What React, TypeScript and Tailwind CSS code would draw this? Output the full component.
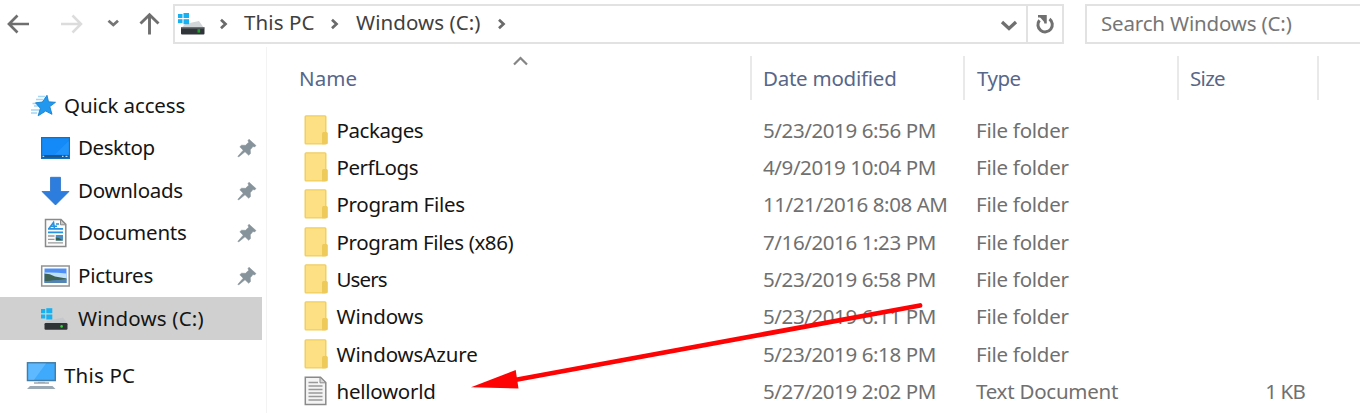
import React from 'react';
import clsx from 'clsx';

const stroke = { fill: 'none', strokeLinecap: 'butt' as const, strokeLinejoin: 'miter' as const };

function Chevron({ className }: { className?: string }) {
  return (
    <svg className={clsx('shrink-0', className)} width="10" height="12" viewBox="0 0 10 12">
      <path d="M2 1.800 L6.500 6 L2 10.200" {...stroke} stroke="#6a6a6a" strokeWidth="2.700" />
    </svg>
  );
}

function DriveIcon() {
  return (
    <svg width="28" height="24" viewBox="0 0 28 24" className="shrink-0">
      <path d="M7 12 L21 9 L26 16 H3.500 Z" fill="#d3d6d8" />
      <rect x="0" y="2" width="4.500" height="4" fill="#17b1f2" />
      <rect x="5.500" y="1" width="5.500" height="5" fill="#17b1f2" />
      <rect x="0" y="7.200" width="4.500" height="4" fill="#17b1f2" />
      <rect x="5.500" y="7.200" width="5.500" height="5" fill="#17b1f2" />
      <rect x="3" y="15" width="23.500" height="7.500" rx="1" fill="#30353a" />
      <rect x="3" y="15" width="23.500" height="1.500" rx="0.700" fill="#6d7276" />
      <rect x="19.500" y="17.200" width="2.600" height="3.400" fill="#1f9f2b" />
    </svg>
  );
}

function SideDriveIcon() {
  return (
    <svg width="28" height="24" viewBox="0 0 28 24" className="shrink-0">
      <path d="M6 14 L22 10.500 L27 17 H3.500 Z" fill="#c5c8ca" />
      <rect x="0" y="2" width="4.200" height="4.200" fill="#17b1f2" />
      <rect x="5.300" y="1.200" width="6" height="5" fill="#17b1f2" />
      <rect x="0" y="7.500" width="4.200" height="4" fill="#17b1f2" />
      <rect x="5.300" y="7.500" width="6" height="5" fill="#17b1f2" />
      <rect x="3.500" y="16" width="23" height="6.800" rx="1.200" fill="#2f3335" />
      <circle cx="20.600" cy="19.400" r="1.300" fill="#35d03c" />
    </svg>
  );
}

function StarIcon() {
  return (
    <svg width="26" height="24" viewBox="0 0 26 24" className="shrink-0">
      <path d="M7 2.500 H14 M5 5.500 H12 M1.500 9.500 H7 M3 12 H9 M0 16 H8 M0 19 H6" stroke="#a5d6f3" strokeWidth="1.400" />
      <path d="M16 1.300 L17.500 7.800 L24.500 8.300 L18.800 12.600 L21 20.300 L14.700 17 L7.200 21.800 L9.300 14.200 L4.500 8.800 L11.400 8 Z" fill="#2299ee" stroke="#1581cf" strokeWidth="0.900" />
    </svg>
  );
}

function DesktopIcon() {
  return (
    <svg width="30" height="24" viewBox="0 0 30 24" className="shrink-0">
      <rect x="1.600" y="1.600" width="27.800" height="20.800" fill="#138af8" stroke="#1571bd" strokeWidth="1.200" />
      <path d="M15 18.500 L28.800 5 V18.500 Z" fill="#2b9bff" opacity=".6" />
      <rect x="2.200" y="19" width="26.600" height="2.800" fill="#1b5688" />
      <path d="M2.600 20.400 H4.200 M22 20.400 H23.500 M25.500 20.400 H27.500" stroke="#b9dcfa" strokeWidth="1.200" />
    </svg>
  );
}

function DownloadIcon() {
  return (
    <svg width="30" height="30" viewBox="0 0 30 30" className="shrink-0">
      <path d="M10.500 1.300 H20.500 V15.500 H29 L15.500 29 L2 15.500 H10.500 Z" fill="#2c7ddd" stroke="#2b71c8" strokeWidth="0.800" />
    </svg>
  );
}

function DocumentIcon() {
  return (
    <svg width="24" height="30" viewBox="0 0 24 30" className="shrink-0">
      <path d="M1.500 1.500 H17 L21.800 6.300 V28.500 H1.500 Z" fill="#fbfbfb" stroke="#8a8a8a" strokeWidth="1.500" />
      <path d="M16.500 1.500 V6.800 H21.800 Z" fill="#c9c9c9" stroke="#8a8a8a" />
      <path d="M5 10.500 L9.500 4.500 L10.500 10.500 M7 8.300 H13 M12 6 H15" stroke="#2592e2" strokeWidth="1.600" fill="none" />
      <path d="M4 10.800 H19 M4 14.300 H19" stroke="#2592e2" strokeWidth="1.700" />
      <path d="M4 18 H10.500 M4 21.300 H10.500 M4 24.800 H19" stroke="#9a9a9a" strokeWidth="1.300" />
      <rect x="11.800" y="17" width="7.200" height="5.500" fill="#4d8dc6" />
      <path d="M11.800 22.500 V19.500 L15 20 L19 22.500 Z" fill="#34604e" />
    </svg>
  );
}

function PictureIcon() {
  return (
    <svg width="30" height="24" viewBox="0 0 30 24" className="shrink-0">
      <rect x="1.700" y="2" width="27.500" height="20" fill="#fff" stroke="#939393" strokeWidth="1.500" />
      <rect x="4.500" y="4.500" width="22" height="14.500" fill="#4f8ff5" />
      <path d="M4.500 8.500 Q14 8 26.500 9.500 V14.500 H4.500 Z" fill="#bfe0fb" />
      <path d="M4.500 9.500 Q10 9.500 15 12.500 L26.500 14.500 V15.500 L4.500 17.500 Z" fill="#3e6355" />
      <path d="M4.500 17.200 L26.500 15.200 V19 H4.500 Z" fill="#5384b2" />
    </svg>
  );
}

function PcIcon() {
  return (
    <svg width="30" height="28" viewBox="0 0 30 28" className="shrink-0">
      <rect x="1.500" y="0.800" width="27.800" height="17.700" fill="#3fa9fb" stroke="#417da8" strokeWidth="1.500" />
      <path d="M2.300 1.600 H20 L8 17.700 H2.300 Z" fill="#6cc1ff" opacity=".7" />
      <path d="M12 19.500 H19 V21 H12 Z" fill="#c3ccd2" />
      <path d="M8 21 H23" stroke="#8b99a4" strokeWidth="1.300" />
      <path d="M4 24 H26.500 L29.500 27 H1 Z" fill="#9ba9b5" />
    </svg>
  );
}

function PinIcon() {
  return (
    <svg width="20" height="20" viewBox="0 0 20 20" className="shrink-0">
      <path d="M12 1.200 L19 7.600 L17.600 9 L16 8.500 L13.300 11.800 L13.500 15.600 L11.700 17.300 L8 13.800 L1.600 19 L0.900 18.300 L6.200 12.200 L2.800 8.800 L4.500 7.200 L8.500 7.300 L11.700 4.200 L11 2.400 Z" fill="#87939b" stroke="#87939b" strokeWidth="0.500" />
    </svg>
  );
}

function FolderIcon() {
  return (
    <svg width="25" height="30" viewBox="0 0 25 30" className="shrink-0">
      <rect x="1.200" y="0.900" width="20.600" height="28" rx="0.800" fill="#fde083" stroke="#efcd5f" strokeWidth="1.400" />
      <path d="M18 29.300 V18.500 Q18 17 19.500 17 H22.400 Q23.800 17 23.800 18.500 V28 Q23.800 29.300 22.400 29.300 Z" fill="#edca59" />
    </svg>
  );
}

function TextFileIcon() {
  return (
    <svg width="25" height="30" viewBox="0 0 25 30" className="shrink-0">
      <path d="M1.300 1.200 H16.500 L21.800 6.500 V28.500 H1.300 Z" fill="#f4f4f4" stroke="#8a8a8a" strokeWidth="1.500" />
      <path d="M16 1.200 V6.800 H21.800 Z" fill="#d8d8d8" stroke="#8a8a8a" />
      <path d="M4.500 6.500 H14 M4.500 10 H18.500 M4.500 13.500 H18.500 M4.500 17 H18.500 M4.500 20.500 H18.500 M4.500 24 H18.500" stroke="#999" strokeWidth="1.300" />
    </svg>
  );
}

const quickItems = [
  { label: 'Desktop', icon: <DesktopIcon />, pad: 'pl-[40px]', gap: 'gap-[8px]', track: 'tracking-[-0.45px]' },
  { label: 'Downloads', icon: <DownloadIcon />, pad: 'pl-[40px]', gap: 'gap-[8px]', track: 'tracking-[-0.28px]' },
  { label: 'Documents', icon: <DocumentIcon />, pad: 'pl-[44px]', gap: 'gap-[10px]', track: 'tracking-[-0.2px]' },
  { label: 'Pictures', icon: <PictureIcon />, pad: 'pl-[40px]', gap: 'gap-[8px]', track: 'tracking-[-0.26px]' },
];

const files = [
  { name: 'Packages', date: '5/23/2019 6:56 PM', track: 'tracking-[-0.44px]', dateTrack: 'tracking-[-0.4px]' },
  { name: 'PerfLogs', date: '4/9/2019 10:04 PM', track: 'tracking-[-0.44px]', dateTrack: 'tracking-[-0.4px]' },
  { name: 'Program Files', date: '11/21/2016 8:08 AM', track: 'tracking-[-0.3px]', dateTrack: 'tracking-[-0.42px]' },
  { name: 'Program Files (x86)', date: '7/16/2016 1:23 PM', track: 'tracking-[-0.38px]', dateTrack: 'tracking-[-0.4px]' },
  { name: 'Users', date: '5/23/2019 6:58 PM', track: 'tracking-[-0.9px]', dateTrack: 'tracking-[-0.4px]' },
  { name: 'Windows', date: '5/23/2019 6:11 PM', track: 'tracking-[-0.1px]', dateTrack: 'tracking-[-0.4px]' },
  { name: 'WindowsAzure', date: '5/23/2019 6:18 PM', track: 'tracking-[-0.12px]', dateTrack: 'tracking-[-0.4px]' },
  { name: 'helloworld', date: '5/27/2019 2:02 PM', track: 'tracking-[-0.26px]', dateTrack: 'tracking-[-0.4px]', doc: true },
];

function Toolbar() {
  return (
    <header className="flex h-[47px] items-start pt-1 text-[#404040]">
      <div className="flex h-[40px] w-[173px] shrink-0 items-center">
        <svg width="173" height="40" viewBox="0 0 173 40">
          <path d="M29 20 H9.500 M17.500 11.500 L9 20 L17.500 28.500" {...stroke} stroke="#6f6f6f" strokeWidth="2.700" />
          <path d="M61 20 H80.500 M72.500 11.500 L81 20 L72.500 28.500" {...stroke} stroke="#dcdcdc" strokeWidth="2.500" />
          <path d="M108.500 16.800 L113.300 21 L118 16.800" {...stroke} stroke="#757575" strokeWidth="2.800" />
          <path d="M149.500 30.500 V11.500 M140.500 19.500 L149.500 10.800 L158.500 19.500" {...stroke} stroke="#6f6f6f" strokeWidth="2.900" />
        </svg>
      </div>
      <div className="flex h-[40px] w-[891px] shrink-0 items-center border-2 border-[#e2e2e2] pl-[3px]">
        <DriveIcon />
        <Chevron className="ml-[13px]" />
        <span className="-mt-[5px] ml-[15px] w-[74px] tracking-[0.1px]">This PC</span>
        <Chevron className="ml-[12px]" />
        <span className="-mt-[5px] ml-[16px] w-[127px] tracking-[0.08px]">Windows (C:)</span>
        <Chevron className="ml-[14px]" />
        <svg className="mt-[3px] mr-[8px] ml-auto" width="18" height="12" viewBox="0 0 18 12">
          <path d="M2 2 L9 8.500 L16 2" {...stroke} stroke="#707070" strokeWidth="3.300" />
        </svg>
        <div className="flex h-full w-[36px] items-center justify-center border-l-2 border-[#e2e2e2] pt-[2px]">
          <svg width="20" height="22" viewBox="0 0 20 22">
            <path d="M14.500 5 A7.200 7.200 0 1 1 4.500 6.200" {...stroke} stroke="#707070" strokeWidth="3" />
            <path d="M3 2.300 H10.500 V9.500" {...stroke} stroke="#707070" strokeWidth="2.500" />
            <path d="M10 2 V9 L4 2 Z" fill="#707070" />
          </svg>
        </div>
      </div>
      <div className="ml-[21px] flex h-[40px] grow items-center border-y-2 border-l-2 border-[#e2e2e2] pl-[14px] text-[#767676]">
        <span className="-mt-[2px] tracking-[-0.17px]">Search Windows (C:)</span>
      </div>
    </header>
  );
}

function Sidebar() {
  return (
    <aside className="h-full w-[267px] shrink-0 border-r border-[#f3f3f3] pt-[37px] text-[#151515]">
      <div className="flex h-[43px] items-center gap-[7px] pl-[31px]">
        <StarIcon />
        <span className="-mt-[2px] tracking-[-0.1px]">Quick access</span>
      </div>
      {quickItems.map((item) => (
        <div key={item.label} className={clsx('flex h-[42.6px] items-center pr-[9px]', item.pad, item.gap)}>
          {item.icon}
          <span className={clsx('-mt-[2px] grow', item.track)}>{item.label}</span>
          <PinIcon />
        </div>
      ))}
      <div className="flex h-[42.5px] w-[262px] items-center gap-[9px] bg-[#d0d0d0] pl-[41px]">
        <SideDriveIcon />
        <span className="-mt-[2px] tracking-[0.18px]">Windows (C:)</span>
      </div>
      <div className="mt-[15px] flex h-[43px] items-center gap-[8px] pl-[26px]">
        <PcIcon />
        <span className="-mt-[2px] tracking-[0.2px]">This PC</span>
      </div>
    </aside>
  );
}

export default function App() {
  return (
    <div className="relative flex h-[413px] w-[1360px] flex-col overflow-hidden bg-white font-['Noto_Sans','Open_Sans',sans-serif] text-[20.5px] leading-[28px] whitespace-nowrap">
      <Toolbar />
      <div className="flex min-h-0 grow">
        <Sidebar />
        <main className="grow pt-[9px]">
          <div className="flex h-[44px] items-center text-[#57678a]">
            <div className="flex h-full w-[485px] items-center border-r-2 border-[#e9e9e9] pl-[32px]">
              <span className="w-[214px] tracking-[0.05px]">Name</span>
              <svg className="-mt-[35px]" width="16" height="10" viewBox="0 0 16 10">
                <path d="M1 8.500 L7.500 2 L14 8.500" {...stroke} stroke="#858585" strokeWidth="2.200" />
              </svg>
            </div>
            <div className="flex h-full w-[213px] items-center border-r-2 border-[#e9e9e9] pl-[11px] tracking-[-0.25px]">Date modified</div>
            <div className="flex h-full w-[214px] items-center border-r-2 border-[#e9e9e9] pl-[12px] tracking-[-0.5px]">Type</div>
            <div className="flex h-full w-[140px] items-center border-r-2 border-[#e9e9e9] pl-[11px] tracking-[-0.7px]">Size</div>
          </div>
          <div className="pt-[10.900px]">
            {files.map((f) => (
              <div key={f.name} className="flex h-[37.350px] items-center text-[#707070]">
                <div className="flex w-[496px] items-center gap-[8px] pl-[36.500px] text-[#151515]">
                  {f.doc ? <TextFileIcon /> : <FolderIcon />}
                  <span className={f.track}>{f.name}</span>
                </div>
                <span className={clsx('w-[213px]', f.dateTrack)}>{f.date}</span>
                <span className="w-[214px] tracking-[-0.25px]">{f.doc ? 'Text Document' : 'File folder'}</span>
                {f.doc && <span className="w-[115px] text-right tracking-[-0.8px]">1 KB</span>}
              </div>
            ))}
          </div>
        </main>
      </div>
      <svg className="pointer-events-none absolute top-0 left-0" width="1360" height="413" viewBox="0 0 1360 413">
        <path d="M512 380.500 L920 305.500" stroke="#fe0303" strokeWidth="4.800" strokeLinecap="round" />
        <path d="M471 387.300 L515.700 370 L518.500 388.500 Z" fill="#fe0303" />
      </svg>
    </div>
  );
}
